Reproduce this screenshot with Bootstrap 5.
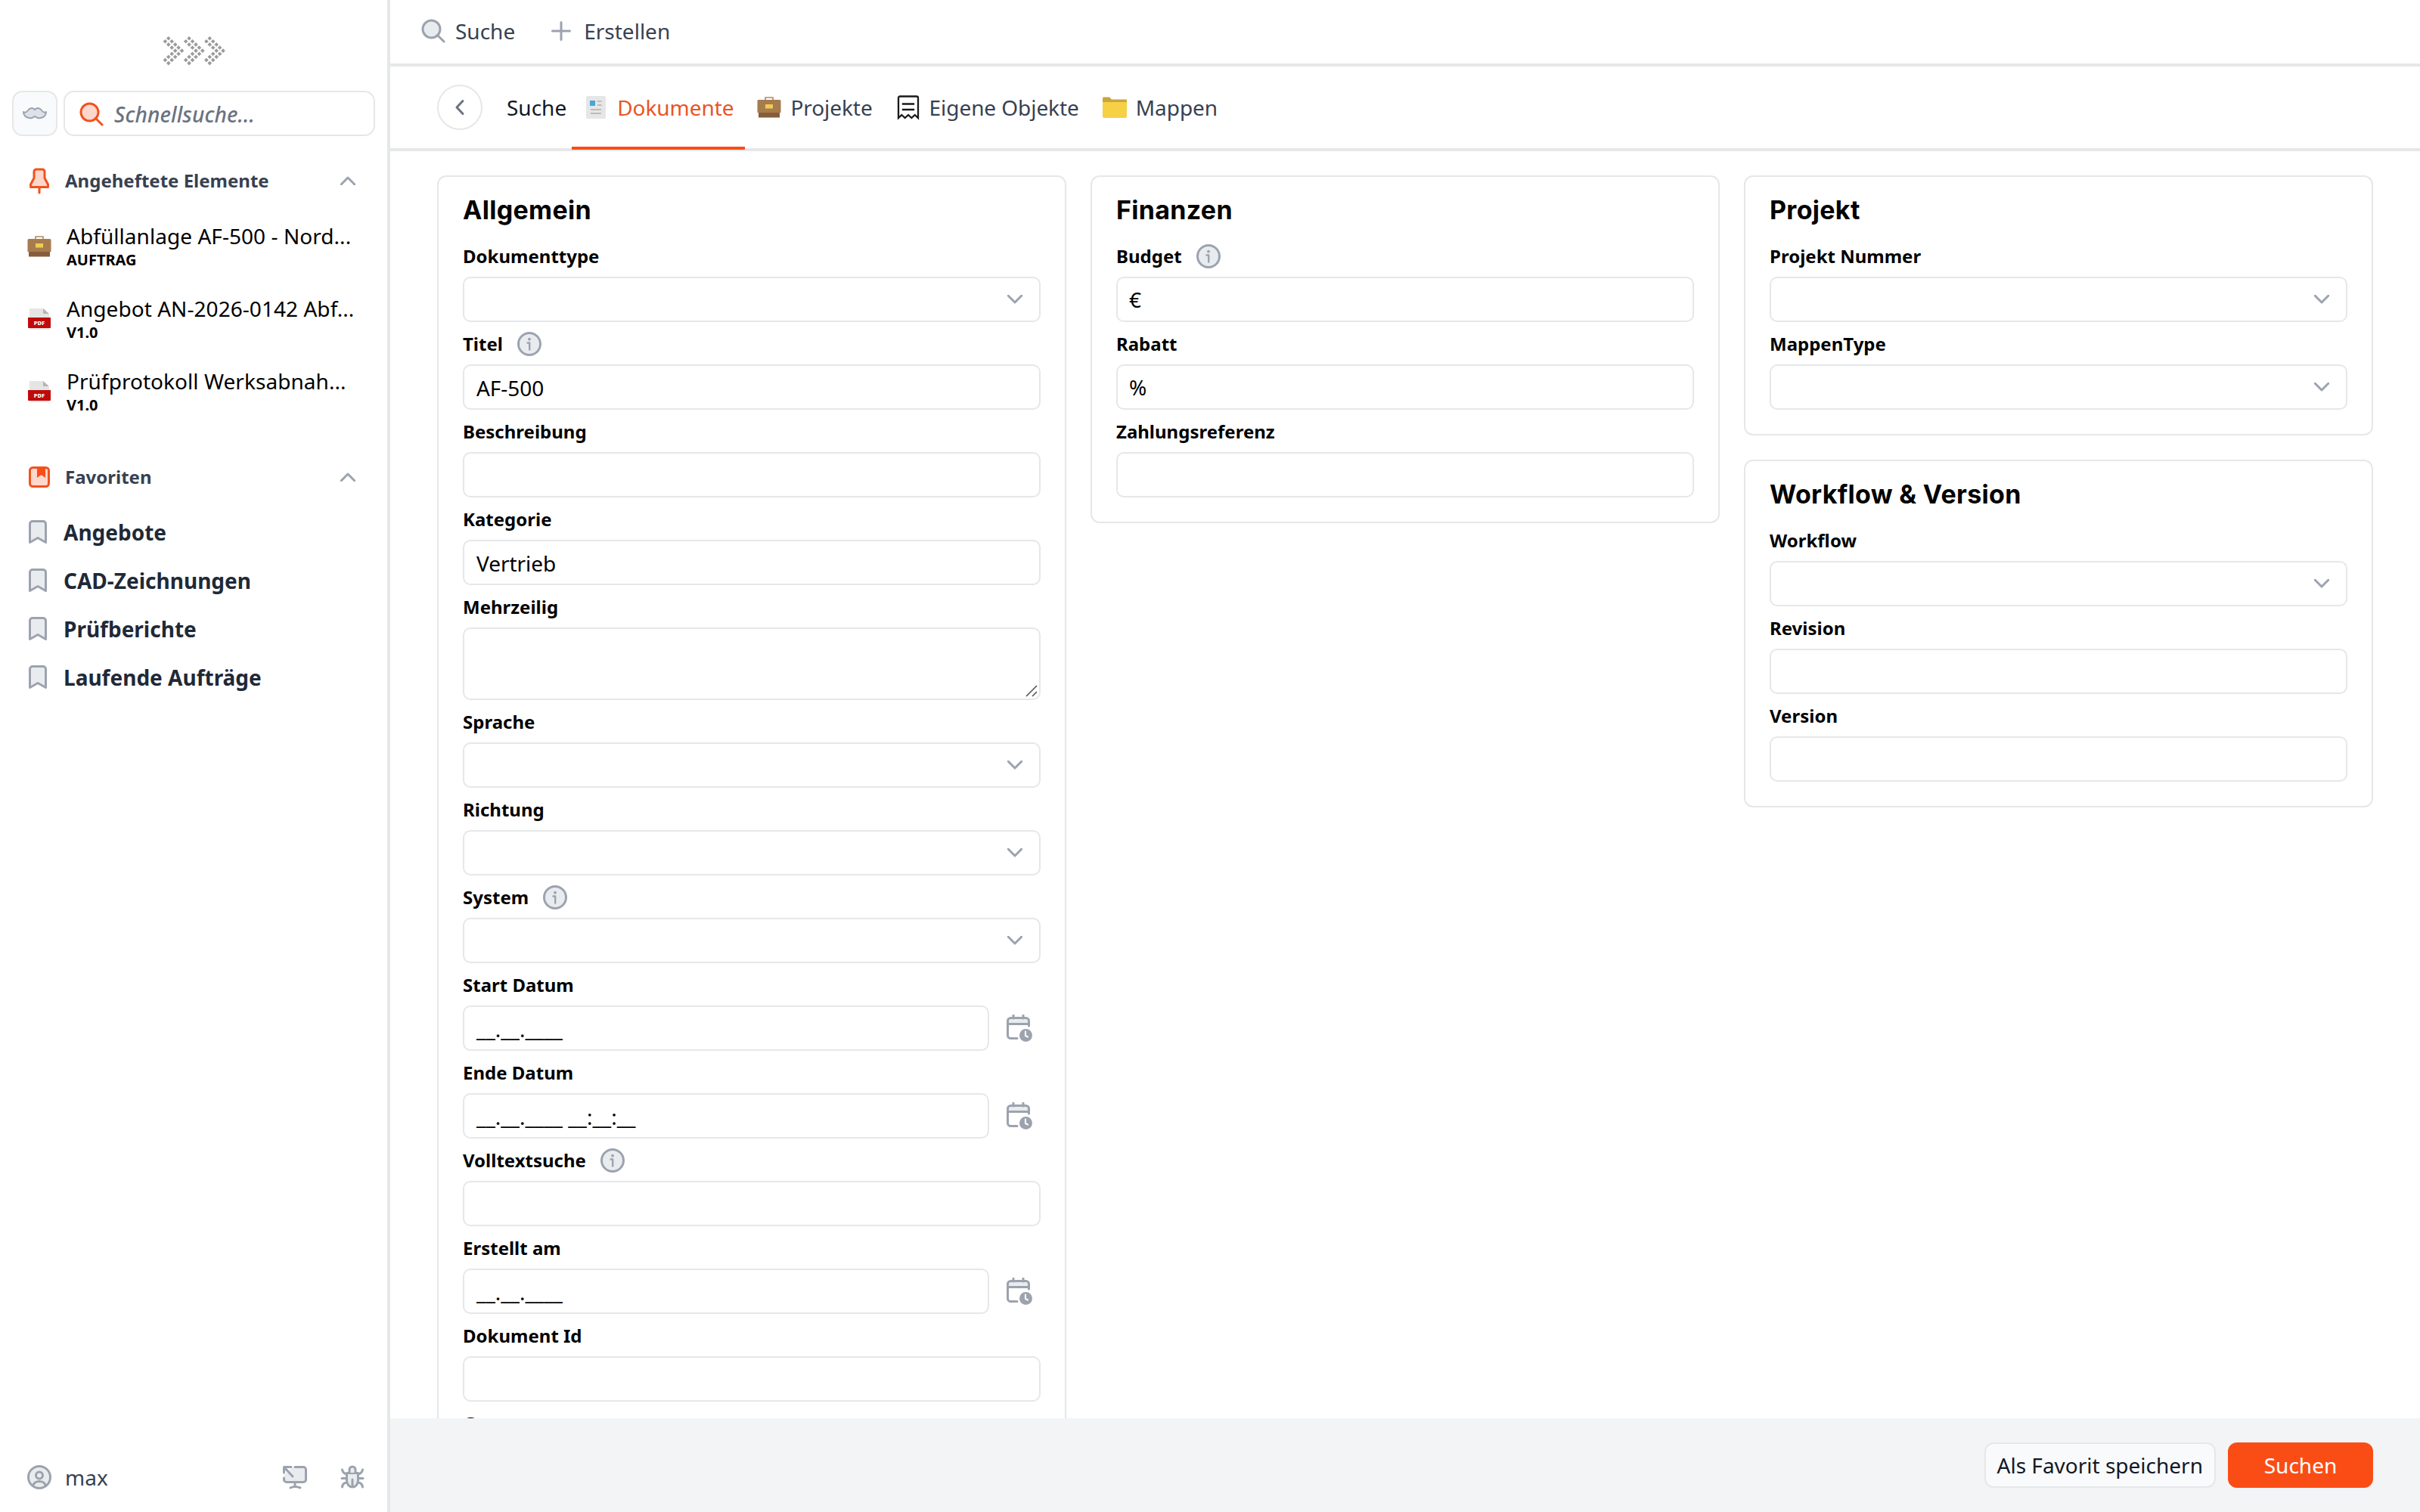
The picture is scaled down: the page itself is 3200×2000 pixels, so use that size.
<!DOCTYPE html>
<html lang="de">
<head>
<meta charset="utf-8">
<title>Suche – Dokumente</title>
<link href="https://cdn.jsdelivr.net/npm/bootstrap@5.3.0/dist/css/bootstrap.min.css" rel="stylesheet">
<style>
  :root { --line: #e5e7e9; --ink: #374151; --accent: #fa4d16; --icon: #9ca3af; --icon-fill: #e9ecef; }
  html, body { height: 100%; }
  body { font-family: "Noto Sans", sans-serif; font-size: 28px; line-height: 38px; color: #000; overflow: hidden; background: #fff; }
  svg { display: block; flex: none; overflow: visible; }
  .ico { fill: var(--icon-fill); stroke: var(--icon); stroke-width: 3; stroke-linecap: round; stroke-linejoin: round; }
  .hot { fill: #fed7cc; stroke: #f0531f; }
  .shell { width: 3200px; height: 2000px; }
  .side { width: 516px; border-right: 4px solid var(--line); }
  .side-logo { height: 120px; padding: 15px 0 0 2px; }
  .side-find { padding: 0 16px; gap: 8px; }
  .stache { width: 60px; height: 60px; border: 2px solid var(--line); border-radius: 14px; background: #f9fafb; }
  .stache .ico { stroke-width: 2; fill: #dde1ea; }
  .quick { height: 60px; border: 2px solid var(--line); border-radius: 14px; padding: 2px 0 0 19px; gap: 14px; font-style: italic; font-weight: 500; color: #6b7280; letter-spacing: .1px; }
  .side-head { height: 64px; padding: 0 42px 2px 36px; font-size: 24px; font-weight: 700; color: var(--ink); }
  .side-head.first { margin-top: 28px; }
  .side-head.second { margin-top: 32px; }
  .side-head .lbl { margin-left: 18px; }
  .pin-list, .fav-list { padding-top: 8px; }
  .pin-item { height: 96px; padding: 0 0 4px 36px; gap: 20px; }
  .pin-item .ttl { line-height: 36px; white-space: nowrap; letter-spacing: .05px; }
  .pin-item .sub { font-size: 20px; line-height: 28px; font-weight: 700; }
  .fav-item { height: 64px; padding-left: 38px; gap: 22px; font-weight: 700; color: #1f2937; }
  .fav-item span { margin-top: -1px; }
  .side-foot { height: 92px; padding: 0 30px 0 36px; color: var(--ink); }
  .topbar { height: 88px; border-bottom: 4px solid var(--line); padding: 0 0 2px 41px; color: var(--ink); }
  .tabbar { height: 112px; border-bottom: 4px solid var(--line); padding-left: 62px; color: var(--ink); }
  .round-back { width: 60px; height: 60px; border: 2px solid var(--line); border-radius: 50%; }
  .crumb { margin: 0 7px 0 32px; color: #111827; }
  .tab { height: 112px; padding: 4px 15px 0 16px; gap: 12px; border-bottom: 4px solid transparent; letter-spacing: -.07px; }
  .tab.on { color: #ea5424; border-bottom-color: var(--accent); }
  .board { padding: 32px 62px 0; gap: 32px; }
  .panel { width: 832px; border: 2px solid var(--line); border-radius: 12px; padding: 0 32px 32px; }
  .panel h2 { font-family: Inter, sans-serif; font-size: 34px; font-weight: 700; letter-spacing: .3px; line-height: 64px; margin: 0; padding-top: 12px; }
  .fl { height: 56px; padding-top: 2px; font-size: 24px; font-weight: 700; line-height: 32px; gap: 19px; }
  .box { height: 60px; border: 2px solid var(--line); border-radius: 10px; padding: 1px 22px 0 16px; background: #fff; letter-spacing: -.05px; }
  .box.pre { padding: 0 22px 0 15px; }
  .area { height: 96px; padding: 0 3px 3px 16px; }
  .cal { width: 68px; padding-left: 23px; }
  .foot { height: 124px; background: #f3f4f6; padding: 0 62px; gap: 16px; }
  .act { height: 60px; border: 2px solid var(--line); border-radius: 12px; background: #f9fafb; color: #111827; font-size: 28px; line-height: 54px; padding: 0 15px; }
  .act.go { background: var(--accent); border-color: var(--accent); color: #fff; width: 192px; }
</style>
<script src="https://cdn.jsdelivr.net/npm/bootstrap@5.3.0/dist/js/bootstrap.bundle.min.js"></script>
</head>
<body>
<svg width="0" height="0" class="position-absolute">
  <defs>
    <symbol id="lens" viewBox="0 0 32 32"><circle cx="13.5" cy="13.5" r="11.5"/><path d="M21.5 21.5 30 30" fill="none"/></symbol>
    <symbol id="up" viewBox="0 0 20 12"><path d="M1 11 10 2l9 9" fill="none"/></symbol>
    <symbol id="down" viewBox="0 0 20 12"><path d="M1 1l9 9 9-9" fill="none"/></symbol>
    <symbol id="info" viewBox="0 0 32 32"><circle cx="16" cy="16" r="14.5"/><path d="M13.500 14.500h2.700v9" fill="none" stroke-width="2.400"/><circle cx="16" cy="9.700" r="1.900" fill="#9ca3af" stroke="none"/></symbol>
    <symbol id="ribbon" viewBox="0 0 24 32"><path d="M1.500 29.500V5A3.500 3.500 0 0 1 5 1.500h14A3.500 3.500 0 0 1 22.500 5v24.500L12 23.500z"/></symbol>
    <symbol id="case" viewBox="0 0 32 30"><path d="M11 5V2h10v3" fill="none" stroke="#b08a5c" stroke-width="1.600"/><path d="M2 20h28v8.500H2z" fill="#875c3a"/><path d="M2 5h28a1.500 1.500 0 0 1 1.500 1.500V22H.5V6.500A1.500 1.500 0 0 1 2 5z" fill="#a67c4f"/><path d="M11 11h10v5.500H11z" fill="#efcd54"/></symbol>
    <symbol id="pdf" viewBox="0 0 32 32"><path d="M4 2h17l8 8v20H5a2 2 0 0 1-2-2V3a1 1 0 0 1 1-1z" fill="#e5e5e5"/><path d="M21 2l8 7h-8z" fill="#b5b5b5"/><path d="M1 14h30v13a1 1 0 0 1-1 1H2a1 1 0 0 1-1-1z" fill="#c00a0a"/><text x="16" y="24" text-anchor="middle" font-size="7.500" font-weight="800" fill="#fff">PDF</text></symbol>
    <symbol id="cal" viewBox="0 0 34 36"><path d="M1.500 12.500V8.500A4 4 0 0 1 5.500 4.500h20A4 4 0 0 1 29.500 8.500v4z"/><path d="M9 1v4M22 1v4M1.500 12v15.500a4 4 0 0 0 4 4H14M29.500 12v3" fill="none"/><circle cx="25.500" cy="27.500" r="8.500" fill="#9ca3af" stroke="none"/><path d="M25 22.500v5.500l3 1.500" fill="none" stroke="#fff" stroke-width="2"/></symbol>
    <g id="arrow" fill="#9b9b9b"><path id="d" d="M6.800-.1l2.800 2.800-2.800 2.800-2.800-2.800z"/><use href="#d" x="-4.400" y="4.100"/><use href="#d" x="4.400" y="4.100"/><use href="#d" y="8.200"/><use href="#d" x="8.900" y="8.200"/><use href="#d" x="4.400" y="12.300"/><use href="#d" x="13.300" y="12.300"/><use href="#d" x="8.900" y="16.400"/><use href="#d" x="17.700" y="16.400"/><use href="#d" x="4.400" y="20.500"/><use href="#d" x="13.300" y="20.500"/><use href="#d" y="24.600"/><use href="#d" x="8.900" y="24.600"/><use href="#d" x="-4.400" y="28.700"/><use href="#d" x="4.400" y="28.700"/><use href="#d" y="32.900"/></g>
  </defs>
</svg>

<div class="shell d-flex">
  <aside class="side d-flex flex-column flex-shrink-0">
    <div class="side-logo d-flex justify-content-center align-items-center">
      <svg width="82" height="39"><use href="#arrow"/><use href="#arrow" x="27.300"/><use href="#arrow" x="54.500"/></svg>
    </div>
    <div class="side-find d-flex">
      <div class="stache d-flex align-items-center justify-content-center flex-shrink-0">
        <svg class="ico" width="32" height="16"><path d="M1 6c2 1.500 4 .5 6-2 2.500-3.500 7-4 9-.8 2-3.200 6.500-2.700 9 .8 2 2.500 4 3.500 6 2 0 6-6 9-11 8-2-.4-3-1.200-4-2.300-1 1.100-2 1.900-4 2.300C7 15 1 12 1 6z"/></svg>
      </div>
      <div class="quick d-flex align-items-center flex-grow-1"><svg class="ico hot" width="32" height="32"><use href="#lens"/></svg>Schnellsuche...</div>
    </div>
    <div class="side-head first d-flex align-items-center">
      <svg class="ico hot" width="32" height="34" viewBox="0 0 32 34"><path d="M12 2h8a3 3 0 0 1 3 3v8.500l4.500 8.500v3.500h-23V22L9 13.500V5a3 3 0 0 1 3-3z"/><path d="M16 26v7" fill="none"/></svg>
      <span class="lbl">Angeheftete Elemente</span>
      <svg class="ico ms-auto" width="20" height="12"><use href="#up"/></svg>
    </div>
    <div class="pin-list">
      <div class="pin-item d-flex align-items-center"><svg width="32" height="30"><use href="#case"/></svg><div><div class="ttl">Abfüllanlage AF-500 - Nord...</div><div class="sub">AUFTRAG</div></div></div>
      <div class="pin-item d-flex align-items-center"><svg width="32" height="32"><use href="#pdf"/></svg><div><div class="ttl">Angebot AN-2026-0142 Abf...</div><div class="sub">V1.0</div></div></div>
      <div class="pin-item d-flex align-items-center"><svg width="32" height="32"><use href="#pdf"/></svg><div><div class="ttl">Prüfprotokoll Werksabnah...</div><div class="sub">V1.0</div></div></div>
    </div>
    <div class="side-head second d-flex align-items-center">
      <svg class="ico hot" width="32" height="32" viewBox="0 0 32 32"><rect x="3.500" y="3.500" width="25" height="25" rx="4"/><path d="M13 4h11v13l-5.500-4-5.500 4z" fill="#fa4d16" stroke="none"/></svg>
      <span class="lbl">Favoriten</span>
      <svg class="ico ms-auto" width="20" height="12"><use href="#up"/></svg>
    </div>
    <div class="fav-list">
      <div class="fav-item d-flex align-items-center"><svg class="ico" width="24" height="32"><use href="#ribbon"/></svg><span>Angebote</span></div>
      <div class="fav-item d-flex align-items-center"><svg class="ico" width="24" height="32"><use href="#ribbon"/></svg><span>CAD-Zeichnungen</span></div>
      <div class="fav-item d-flex align-items-center"><svg class="ico" width="24" height="32"><use href="#ribbon"/></svg><span>Prüfberichte</span></div>
      <div class="fav-item d-flex align-items-center"><svg class="ico" width="24" height="32"><use href="#ribbon"/></svg><span>Laufende Aufträge</span></div>
    </div>
    <div class="side-foot d-flex align-items-center mt-auto">
      <svg class="ico" width="32" height="32" viewBox="0 0 32 32"><circle cx="16" cy="16" r="14.500"/><circle cx="16" cy="13.500" r="4.500"/><path d="M8 27c1-7.500 15-7.500 16 0" fill="none"/></svg>
      <span style="margin-left:18px">max</span>
      <svg class="ico ms-auto" width="32" height="32" viewBox="0 0 32 32"><path d="M14 2.500h13A3.500 3.500 0 0 1 30.500 6v13a3.500 3.500 0 0 1-3.500 3.500H5A3.500 3.500 0 0 1 1.500 19v-6L14 2.500z" stroke="none"/><path d="M16 2.500h11A3.500 3.500 0 0 1 30.500 6v13a3.500 3.500 0 0 1-3.500 3.500H5A3.500 3.500 0 0 1 1.500 19v-2M1.500 10V2.500H11M2 3l11 12M16 23v5M10 30c4-2 8-2 13 0" fill="none"/></svg>
      <svg class="ico" style="margin-left:44px" width="32" height="32" viewBox="0 0 32 32"><path d="M8.500 10.500h15v10c0 5-3.500 8.500-7.500 8.500s-7.500-3.500-7.500-8.500z"/><path d="M12 10V6a4 4 0 0 1 8 0v4" /><path d="M16 19v9M8 17.500H2M24 17.500h6M8.500 12C4.500 11 3 9 2.500 6M23.500 12c4-1 5.500-3 6-6M9 23c-4 0-6 2.500-6.500 6M23 23c4 0 6 2.500 6.500 6" fill="none"/></svg>
    </div>
  </aside>

  <main class="d-flex flex-column flex-grow-1">
    <nav class="topbar d-flex align-items-center flex-shrink-0">
      <svg class="ico" width="32" height="32"><use href="#lens"/></svg><span style="margin-left:13px">Suche</span>
      <svg class="ico" style="margin-left:48px" width="26" height="26"><path d="M13 1.500v23M1.500 13h23"/></svg><span style="margin-left:17px">Erstellen</span>
    </nav>
    <nav class="tabbar d-flex align-items-center flex-shrink-0">
      <div class="round-back d-flex align-items-center justify-content-center"><svg width="12" height="20"><path d="M10 1.500 2 10l8 8.500" fill="none" stroke="#6b7280" stroke-width="3" stroke-linecap="round" stroke-linejoin="round"/></svg></div>
      <span class="crumb">Suche</span>
      <div class="tab on d-flex align-items-center"><svg width="32" height="32"><rect x="3" y="1" width="26" height="30" rx="2" fill="#e6e6e6"/><rect x="8" y="7" width="7" height="7" fill="#45a6d8"/><path d="M18 8h5.500M18 13h5.500M9 19h14M9 24h14" stroke="#bcbcbc" stroke-width="2"/></svg>Dokumente</div>
      <div class="tab d-flex align-items-center"><svg width="32" height="30"><use href="#case"/></svg>Projekte</div>
      <div class="tab d-flex align-items-center"><svg width="32" height="32"><path d="M3 30V3.500A2 2 0 0 1 5 1.500h22a2 2 0 0 1 2 2V30l-4.300-4-4.300 4-4.400-4-4.300 4-4.400-4zM9 11.500h14M9 19h14" fill="none" stroke="#1a1a1a" stroke-width="2.300" stroke-linecap="square"/></svg>Eigene Objekte</div>
      <div class="tab d-flex align-items-center"><svg width="32" height="28"><path d="M0 2a1.500 1.500 0 0 1 1.500-1.500H9l3 3h20V8H0z" fill="#c9a53d"/><path d="M0 7h32v19a2 2 0 0 1-2 2H2a2 2 0 0 1-2-2z" fill="#f6d045"/></svg>Mappen</div>
    </nav>

    <section class="board d-flex align-items-start flex-grow-1 overflow-hidden">
      <div class="panel">
        <h2>Allgemein</h2>
        <div class="fl d-flex align-items-center">Dokumenttype</div>
        <div class="box d-flex align-items-center justify-content-end pre"><svg class="ico" width="20" height="12"><use href="#down"/></svg></div>
        <div class="fl d-flex align-items-center">Titel<svg class="ico" width="32" height="32"><use href="#info"/></svg></div>
        <div class="box d-flex align-items-center">AF-500</div>
        <div class="fl d-flex align-items-center">Beschreibung</div>
        <div class="box"></div>
        <div class="fl d-flex align-items-center">Kategorie</div>
        <div class="box d-flex align-items-center">Vertrieb</div>
        <div class="fl d-flex align-items-center">Mehrzeilig</div>
        <div class="box area d-flex align-items-end justify-content-end"><svg width="14" height="14"><path d="M0 14 14 0M8 14l6-6" stroke="#555" stroke-width="1.600" fill="none"/></svg></div>
        <div class="fl d-flex align-items-center">Sprache</div>
        <div class="box d-flex align-items-center justify-content-end pre"><svg class="ico" width="20" height="12"><use href="#down"/></svg></div>
        <div class="fl d-flex align-items-center">Richtung</div>
        <div class="box d-flex align-items-center justify-content-end pre"><svg class="ico" width="20" height="12"><use href="#down"/></svg></div>
        <div class="fl d-flex align-items-center">System<svg class="ico" width="32" height="32"><use href="#info"/></svg></div>
        <div class="box d-flex align-items-center justify-content-end pre"><svg class="ico" width="20" height="12"><use href="#down"/></svg></div>
        <div class="fl d-flex align-items-center">Start Datum</div>
        <div class="d-flex align-items-center"><div class="box d-flex align-items-center flex-grow-1">__.__.____</div><div class="cal"><svg class="ico" width="34" height="36"><use href="#cal"/></svg></div></div>
        <div class="fl d-flex align-items-center">Ende Datum</div>
        <div class="d-flex align-items-center"><div class="box d-flex align-items-center flex-grow-1">__.__.____ __:__:__</div><div class="cal"><svg class="ico" width="34" height="36"><use href="#cal"/></svg></div></div>
        <div class="fl d-flex align-items-center">Volltextsuche<svg class="ico" width="32" height="32"><use href="#info"/></svg></div>
        <div class="box"></div>
        <div class="fl d-flex align-items-center">Erstellt am</div>
        <div class="d-flex align-items-center"><div class="box d-flex align-items-center flex-grow-1">__.__.____</div><div class="cal"><svg class="ico" width="34" height="36"><use href="#cal"/></svg></div></div>
        <div class="fl d-flex align-items-center">Dokument Id</div>
        <div class="box"></div>
        <div class="fl d-flex align-items-center">Gruppe</div>
        <div class="box"></div>
      </div>

      <div class="panel">
        <h2>Finanzen</h2>
        <div class="fl d-flex align-items-center">Budget<svg class="ico" width="32" height="32"><use href="#info"/></svg></div>
        <div class="box d-flex align-items-center pre">€</div>
        <div class="fl d-flex align-items-center">Rabatt</div>
        <div class="box d-flex align-items-center pre">%</div>
        <div class="fl d-flex align-items-center">Zahlungsreferenz</div>
        <div class="box"></div>
      </div>

      <div class="d-flex flex-column" style="gap:32px">
        <div class="panel">
          <h2>Projekt</h2>
          <div class="fl d-flex align-items-center">Projekt Nummer</div>
          <div class="box d-flex align-items-center justify-content-end pre"><svg class="ico" width="20" height="12"><use href="#down"/></svg></div>
          <div class="fl d-flex align-items-center">MappenType</div>
          <div class="box d-flex align-items-center justify-content-end pre"><svg class="ico" width="20" height="12"><use href="#down"/></svg></div>
        </div>
        <div class="panel">
          <h2>Workflow &amp; Version</h2>
          <div class="fl d-flex align-items-center">Workflow</div>
          <div class="box d-flex align-items-center justify-content-end pre"><svg class="ico" width="20" height="12"><use href="#down"/></svg></div>
          <div class="fl d-flex align-items-center">Revision</div>
          <div class="box"></div>
          <div class="fl d-flex align-items-center">Version</div>
          <div class="box"></div>
        </div>
      </div>
    </section>

    <footer class="foot d-flex align-items-center justify-content-end flex-shrink-0">
      <button class="btn act">Als Favorit speichern</button>
      <button class="btn act go">Suchen</button>
    </footer>
  </main>
</div>
</body>
</html>
